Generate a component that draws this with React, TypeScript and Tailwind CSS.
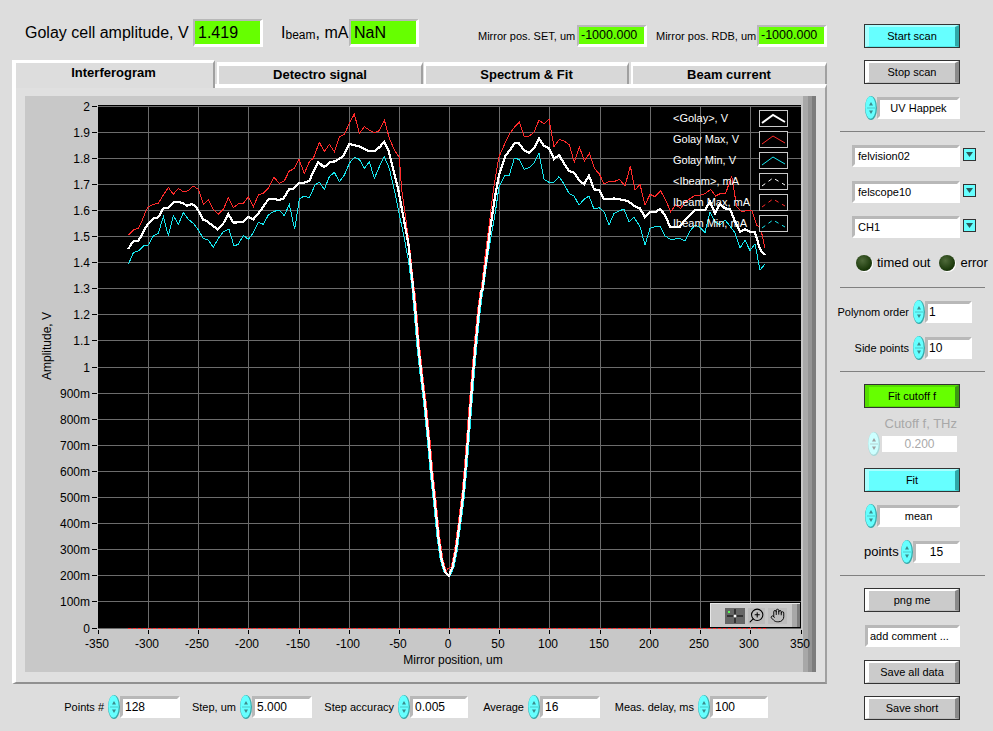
import { Hand, ZoomIn } from "lucide-react";
import type { ReactNode } from "react";

const yLabels = ["2","1.9","1.8","1.7","1.6","1.5","1.4","1.3","1.2","1.1","1","900m","800m","700m","600m","500m","400m","300m","200m","100m","0"];
const xTicks: [string, number][] = [["-350",98],["-300",148],["-250",198],["-200",248],["-150",299],["-100",349],["-50",399],["0",449],["50",499],["100",549],["150",600],["200",650],["250",700],["300",750],["350",801]];

// traced from crops, 3x scale: left part, trough, right part
const whiteL = "85,447 95,430 103,423 115,423 125,405 135,385 145,370 160,355 175,352 190,325 205,323 220,307 235,306 250,310 260,317 275,312 285,317 295,332 310,360 320,363 335,375 353,388 370,370 385,342 400,368 415,367 430,365 445,350 460,358 475,340 490,320 505,298 520,296 535,300 550,296 567,268 582,265 597,248 612,248 628,243 640,215 655,186 672,202 690,186 705,184 715,178 730,168 748,132 763,136 780,140 805,153 825,153 840,140 853,125 865,150 880,210 895,270 910,350 925,430 940,570";
const redL = "85,405 100,390 115,385 125,365 135,340 145,320 160,313 175,310 190,285 205,262 220,283 235,265 250,275 265,272 280,258 295,268 310,313 325,300 340,328 355,343 370,328 385,293 400,323 415,312 430,310 445,290 460,320 475,285 490,280 505,265 522,232 538,250 553,243 567,214 582,206 597,178 613,220 628,185 640,175 658,127 673,155 688,133 703,155 718,110 733,103 748,70 763,42 778,100 793,80 808,90 823,98 838,92 853,60 868,115 883,150 898,172 905,270 920,375 930,450 943,570";
const cyanL = "85,493 100,458 115,453 130,438 145,435 160,408 175,400 190,350 205,407 220,347 235,373 250,338 265,358 280,370 295,390 310,415 325,420 340,442 355,415 370,395 387,388 402,438 415,433 430,406 445,418 460,398 475,367 490,373 505,345 520,335 537,330 553,347 568,313 584,388 598,297 613,288 628,293 645,255 658,247 673,268 688,230 703,217 718,245 733,225 748,190 763,172 778,178 793,205 808,185 823,235 838,200 853,170 868,205 883,270 895,330 910,400 925,480 937,570";
const trough = "100,0 105,50 115,170 125,260 135,340 145,440 155,550 165,640 175,740 185,810 195,845 207,857 218,830 228,780 240,690 250,610 258,520 265,430 272,340 280,240 288,150 297,60 305,0";
const whiteR = "97,570 110,470 120,390 135,290 147,225 165,170 180,150 193,130 207,130 222,150 237,158 252,145 267,115 282,138 297,145 312,177 327,165 342,190 357,213 372,218 387,240 402,253 417,227 432,268 447,270 462,298 477,298 492,295 507,298 522,300 537,305 552,318 570,325 585,352 600,337 615,337 630,327 645,345 660,380 675,380 690,380 705,360 720,345 735,330 750,330 765,330 780,305 795,340 810,312 825,325 840,327 855,365 870,395 885,388 900,395 915,397 930,448 945,465";
const redR = "93,570 105,470 118,370 130,270 147,170 165,130 180,100 195,80 208,67 222,108 237,108 252,97 267,60 282,72 297,57 312,140 328,118 343,123 358,135 373,187 388,140 403,183 418,160 433,205 448,222 462,252 477,245 492,245 508,238 525,258 541,198 555,270 570,253 585,315 600,283 615,290 632,273 647,300 662,335 677,315 692,325 707,305 722,295 737,285 752,285 767,280 782,268 797,288 812,280 827,280 845,228 860,320 875,335 890,332 905,330 920,375 932,385 945,445";
const cyanR = "100,570 113,470 125,400 137,330 147,260 165,225 178,225 193,175 207,178 222,208 237,203 252,190 267,160 282,238 297,247 312,247 327,230 342,252 357,280 372,288 387,315 402,298 417,288 432,327 447,323 462,335 477,375 492,340 507,333 522,327 537,365 552,352 570,380 585,435 600,385 615,380 630,378 645,408 660,417 675,417 690,415 705,423 720,393 735,375 750,382 765,398 780,335 795,365 810,375 825,360 840,378 855,398 870,445 885,420 900,452 915,432 930,510 945,492";

function pts(s: string, ox: number, oy: number, dx = 0, dip = 0) {
  return s.split(" ").map((p) => {
    const [x, y] = p.split(",").map(Number);
    const shift = dx === 0 ? 0 : x < 207 ? dx : -dx;
    const up = x === 207 ? dip : 0;
    return `${ox + (x + shift) / 3},${oy + (y - up) / 3}`;
  }).join(" ");
}

const line = (l: string, dx: number, dip: number, r: string) =>
  [pts(l, 100, 100), pts(trough, 380, 290, dx, dip), pts(r, 450, 100)].join(" ");

function Plot() {
  return (
    <svg width="791" height="576" viewBox="25 96 791 576" className="relative block overflow-visible">
      <rect x="98" y="105" width="703" height="523" fill="#000" />
      <g stroke="#6c6c6c" strokeWidth="1" shapeRendering="crispEdges">
        {yLabels.map((_, i) => <line key={i} x1="98" x2="801" y1={106 + i * 26.1} y2={106 + i * 26.1} />)}
        {xTicks.slice(1, -1).map(([l, x]) => <line key={l} x1={x} x2={x} y1="106" y2="628" />)}
      </g>
      <g stroke="#000" strokeWidth="1" shapeRendering="crispEdges">
        {yLabels.map((_, i) => <line key={i} x1="92" x2="97" y1={106 + i * 26.1} y2={106 + i * 26.1} />)}
        {xTicks.map(([l, x]) => <line key={l} x1={x} x2={x} y1="630" y2="634" />)}
      </g>
      <g fill="#000" className="text-[12px]">
        {yLabels.map((l, i) => <text key={l} x="90" y={110.500 + i * 26.1} textAnchor="end">{l}</text>)}
        {xTicks.map(([l, x]) => <text key={l} x={x - 1} y="648" textAnchor="middle">{l}</text>)}
        <text x="453" y="664" textAnchor="middle">Mirror position, um</text>
        <text x="0" y="0" textAnchor="middle" transform="translate(51 346) rotate(-90)">Amplitude, V</text>
      </g>
      <line x1="128" x2="766" y1="628" y2="628" stroke="#ff3030" strokeWidth="1" strokeDasharray="3 2" shapeRendering="crispEdges" />
      <g fill="none" shapeRendering="crispEdges">
        <polyline points={line(redL, 4, 20, redR)} stroke="#ff2a2a" strokeWidth="1" />
        <polyline points={line(cyanL, -4, 0, cyanR)} stroke="#16e8f0" strokeWidth="1" />
        <polyline points={line(whiteL, 0, 0, whiteR)} stroke="#fff" strokeWidth="2.200" />
      </g>
    </svg>
  );
}

const legend = [
  { name: "<Golay>, V", color: "#fff", w: 2, dash: undefined },
  { name: "Golay Max, V", color: "#ff2a2a", w: 1, dash: undefined },
  { name: "Golay Min, V", color: "#16e8f0", w: 1, dash: undefined },
  { name: "<Ibeam>, mA", color: "#fff", w: 1, dash: "4 4" },
  { name: "Ibeam Max, mA", color: "#ff2a2a", w: 1, dash: "4 4" },
  { name: "Ibeam Min, mA", color: "#16e8f0", w: 1, dash: "4 4" },
];

function Legend() {
  return (
    <div className="absolute left-[648px] top-[14px] w-[115px]">
      {legend.map((l) => (
        <div key={l.name} className="flex h-[21px] items-start justify-between">
          <span className="whitespace-nowrap text-[11px] leading-[16px] text-white">{l.name}</span>
          <svg width="29" height="17" className="border border-[#c8c8c8] bg-black">
            <polyline points="2,12 13,4 25,11" fill="none" stroke={l.color} strokeWidth={l.w} strokeDasharray={l.dash} />
          </svg>
        </div>
      ))}
    </div>
  );
}

function Toolbar() {
  return (
    <div className="absolute left-[685px] top-[507px] flex h-[24px] w-[90px] items-center border-t border-l border-[#e8e8e8] bg-[#c8c8c8] pl-[14px]">
      <div className="flex h-[16px] w-[20px] items-center justify-center bg-[#666]">
        <svg width="20" height="16"><path d="M10 1v14M2 8h16" stroke="#000" strokeWidth="1" /><circle cx="10" cy="8" r="1.5" fill="#fff" /><rect x="3" y="3" width="2" height="2" fill="#5f5" /></svg>
      </div>
      <div className="ml-[3px] flex h-[16px] w-[17px] items-center justify-center bg-[#bdbdbd]"><ZoomIn size={17} strokeWidth={1.500} color="#000" className="-scale-x-100" /></div>
      <div className="ml-[3px] flex h-[16px] w-[19px] items-center justify-center bg-[#bdbdbd]"><Hand size={15} strokeWidth={1.500} color="#000" /></div>
      <div className="ml-auto flex h-full">
        <div className="w-[5px] bg-[#a8a8a8]" />
        <div className="w-[3px] bg-[#7c7c7c]" />
      </div>
    </div>
  );
}

function Spinner({ off }: { off?: boolean }) {
  const fill = off ? "#ccffff" : "#66ffff";
  const dark = off ? "#a8d8d8" : "#38a8a8";
  const mark = off ? "#a0a0a0" : "#3c8c8c";
  return (
    <svg width="12" height="24" className="shrink-0">
      <ellipse cx="6" cy="12" rx="6" ry="12" fill={dark} />
      <ellipse cx="5.500" cy="11.500" rx="5.200" ry="11.200" fill={fill} />
      <path d="M6 6 4 9.500h4zM6 18l-2-3.500h4z" fill={mark} />
      <path d="M2 12h8" stroke={mark} strokeWidth="0.500" />
    </svg>
  );
}

const recessed = "border-t-[3px] border-l-[3px] border-t-[#b8b8b8] border-l-[#b8b8b8] border-r-[3px] border-b-[3px] border-r-white border-b-white";

function Field({ children, className }: { children: ReactNode; className: string }) {
  return (
    <div className={`flex h-[22px] shrink-0 items-center bg-white text-black whitespace-nowrap ${recessed} ${className}`}>
      {children}
    </div>
  );
}

function Readout({ text, small }: { text: string; small?: boolean }) {
  return (
    <div className={`flex w-[70px] shrink-0 items-center bg-[#66ff00] border-t-[2px] border-l-[2px] border-t-[#b8b8b8] border-l-[#b8b8b8] border-r-[3px] border-b-[3px] border-r-white border-b-white text-black ${small ? "h-[22px] pl-[2px] text-[12.500px]" : "h-[28px] pl-[3px] text-[16px]"}`}>
      {text}
    </div>
  );
}

const btnTone = {
  gray: "bg-[#cbcbcb] border-t-white border-l-white border-r-[#8a8a8a] border-b-[#bdbdbd]",
  cyan: "bg-[#66ffff] border-t-[#a8ffff] border-l-[#a8ffff] border-r-[#2fa8a8] border-b-[#55e8e8]",
  green: "bg-[#66ff00] border-t-[#55dd00] border-l-[#55dd00] border-r-[#3a9a10] border-b-[#55dd00]",
};

function Btn({ label, tone, className }: { label: string; tone: keyof typeof btnTone; className: string }) {
  return (
    <div className={`ml-[24px] h-[24px] w-[96px] shrink-0 border border-[#333] ${className}`}>
      <div className={`flex h-full items-center justify-center border-t-[2px] border-l-[4px] border-r-[4px] border-b-[1px] text-[11px] text-black ${btnTone[tone]}`}>
        {label}
      </div>
    </div>
  );
}

function Sep({ className }: { className: string }) {
  return <div className={`h-px w-[145px] shrink-0 bg-[#808080] ${className}`} />;
}

function Combo({ text, className }: { text: string; className: string }) {
  return (
    <div className={`ml-[12px] flex shrink-0 items-start ${className}`}>
      <Field className="w-[108px] pl-[3px] text-[11px]">{text}</Field>
      <div className="ml-[3px] mt-[3px] flex h-[13px] w-[13px] items-center justify-center border border-[#333] bg-[#66ffff]">
        <svg width="9" height="7"><path d="M1 1h7L4.500 6z" fill="#2a5a5a" /></svg>
      </div>
    </div>
  );
}

function Led({ label }: { label: string }) {
  return (
    <div className="flex items-center">
      <div className="h-[16px] w-[16px] rounded-full bg-[radial-gradient(circle_at_40%_35%,#4f6a3a,#1c3a0c_65%,#0c1c04)] shadow-[1px_1px_0_#fff]" />
      <span className="ml-[5px] text-[13px] text-black">{label}</span>
    </div>
  );
}

function BottomCtl({ label, value, className, fieldW }: { label: string; value: string; className: string; fieldW: string }) {
  return (
    <div className={`flex shrink-0 items-center justify-end ${className}`}>
      <span className="mr-[4px] whitespace-nowrap text-[11px] text-black">{label}</span>
      <Spinner />
      <Field className={`pl-[2px] text-[12px] ${fieldW}`}>{value}</Field>
    </div>
  );
}

const tabs = [
  { label: "Detectro signal", cls: "w-[206px] ml-[2px]" },
  { label: "Spectrum & Fit", cls: "w-[205px] ml-[1px]" },
  { label: "Beam current", cls: "w-[196px] ml-[2px]" },
];

export default function App() {
  return (
    <div className="flex h-[731px] w-[993px] overflow-hidden bg-[#dddddd] font-['Liberation_Sans',sans-serif]">
      <div className="w-[840px] shrink-0 pl-[12px]">
        <div className="flex h-[60px] items-end pb-[13px] text-black">
          <div className="ml-[13px] flex h-[28px] w-[168px] items-center whitespace-nowrap text-[16px]">Golay cell amplitude, V</div>
          <Readout text="1.419" />
          <div className="ml-[18px] flex h-[28px] w-[68px] items-center whitespace-nowrap text-[16px]">I<span className="text-[12px] pt-[3px]">beam</span>, mA</div>
          <Readout text="NaN" />
          <div className="ml-[59px] flex h-[22px] w-[99px] items-center whitespace-nowrap text-[11px]">Mirror pos. SET, um</div>
          <Readout text="-1000.000" small />
          <div className="ml-[9px] flex h-[22px] w-[101px] items-center whitespace-nowrap text-[11px]">Mirror pos. RDB, um</div>
          <Readout text="-1000.000" small />
        </div>

        <div className="flex items-start">
          <div className="relative z-10 -mb-[4px] flex h-[28px] w-[203px] items-start justify-center border-t-[3px] border-l-[4px] border-r-[2px] border-t-white border-l-white border-r-[#a0a0a0] bg-[#dddddd] pr-[2px] text-[13px] font-bold text-black">
            Interferogram
          </div>
          {tabs.map((t) => (
            <div key={t.label} className={`mt-[2px] flex h-[22px] items-center justify-center border-t-[4px] border-l-[2px] border-r-[2px] border-t-white border-l-white border-r-[#a0a0a0] bg-[#d8d8d8] pb-[1px] text-[13px] font-bold text-black ${t.cls}`}>
              {t.label}
            </div>
          ))}
        </div>

        <div className="h-[600px] w-[815px] border-t-[4px] border-l-[4px] border-r-[2px] border-b-[2px] border-t-white border-l-white border-r-[#a0a0a0] border-b-[#909090] bg-[#e0e0e0] pl-[9px] pt-[8px]">
          <div className="relative h-[576px] w-[791px] bg-[#c8c8c8]">
            <div className="absolute right-0 top-0 flex h-full">
              <div className="w-[5px] bg-[#a8a8a8]" />
              <div className="w-[4px] bg-[#949494]" />
              <div className="w-[4px] bg-[#7c7c7c]" />
            </div>
            <Plot />
            <Legend />
            <Toolbar />
          </div>
        </div>

        <div className="mt-[11px] flex">
          <BottomCtl label="Points #" value="128" className="w-[168px]" fieldW="w-[60px]" />
          <BottomCtl label="Step, um" value="5.000" className="w-[132px]" fieldW="w-[60px]" />
          <BottomCtl label="Step accuracy" value="0.005" className="w-[156px]" fieldW="w-[58px]" />
          <BottomCtl label="Average" value="16" className="w-[132px]" fieldW="w-[60px]" />
          <BottomCtl label="Meas. delay, ms" value="100" className="w-[168px]" fieldW="w-[58px]" />
        </div>
      </div>

      <div className="flex w-[153px] shrink-0 flex-col text-black">
        <Btn label="Start scan" tone="cyan" className="mt-[24px]" />
        <Btn label="Stop scan" tone="gray" className="mt-[12px]" />
        <div className="ml-[25px] mt-[12px] flex h-[24px] shrink-0 items-center">
          <Spinner />
          <Field className="w-[83px] justify-center text-[11px]">UV Happek</Field>
        </div>
        <Sep className="mt-[11px]" />
        <Combo text="felvision02" className="mt-[13px]" />
        <Combo text="felscope10" className="mt-[14px]" />
        <Combo text="CH1" className="mt-[13px]" />
        <div className="ml-[16px] mt-[17px] flex h-[16px] shrink-0 items-center gap-[9px]">
          <Led label="timed out" />
          <Led label="error" />
        </div>
        <Sep className="mt-[16px]" />
        <div className="mt-[12px] flex h-[24px] w-[132px] shrink-0 items-center justify-end">
          <span className="mr-[4px] whitespace-nowrap text-[11px]">Polynom order</span>
          <Spinner />
          <Field className="w-[47px] pl-[1px] text-[12px]">1</Field>
        </div>
        <div className="mt-[12px] flex h-[24px] w-[132px] shrink-0 items-center justify-end">
          <span className="mr-[4px] whitespace-nowrap text-[11px]">Side points</span>
          <Spinner />
          <Field className="w-[47px] pl-[1px] text-[12px]">10</Field>
        </div>
        <Sep className="mt-[11px]" />
        <Btn label="Fit cutoff f" tone="green" className="mt-[12px]" />
        <div className="mt-[9px] flex h-[14px] w-[117px] shrink-0 items-center justify-end whitespace-nowrap text-[13px] text-[#a8a8a8]">Cutoff f, THz</div>
        <div className="ml-[28px] mt-px flex h-[24px] shrink-0 items-center">
          <Spinner off />
          <div className="ml-[2px] flex h-[16px] w-[75px] items-center justify-center bg-white text-[12px] text-[#a8a8a8]">0.200</div>
        </div>
        <Btn label="Fit" tone="cyan" className="mt-[12px]" />
        <div className="ml-[25px] mt-[12px] flex h-[24px] shrink-0 items-center">
          <Spinner />
          <Field className="w-[83px] justify-center text-[11px]">mean</Field>
        </div>
        <div className="ml-[24px] mt-[12px] flex h-[24px] shrink-0 items-center">
          <span className="w-[37px] text-[13px]">points</span>
          <Spinner />
          <Field className="w-[47px] justify-center text-[12px]">15</Field>
        </div>
        <Sep className="mt-[11px]" />
        <Btn label="png me" tone="gray" className="mt-[12px]" />
        <Field className="ml-[25px] mt-[13px] w-[95px] pl-[2px] text-[11px]">add comment ...</Field>
        <Btn label="Save all data" tone="gray" className="mt-[13px]" />
        <Btn label="Save short" tone="gray" className="mt-[12px]" />
      </div>
    </div>
  );
}
